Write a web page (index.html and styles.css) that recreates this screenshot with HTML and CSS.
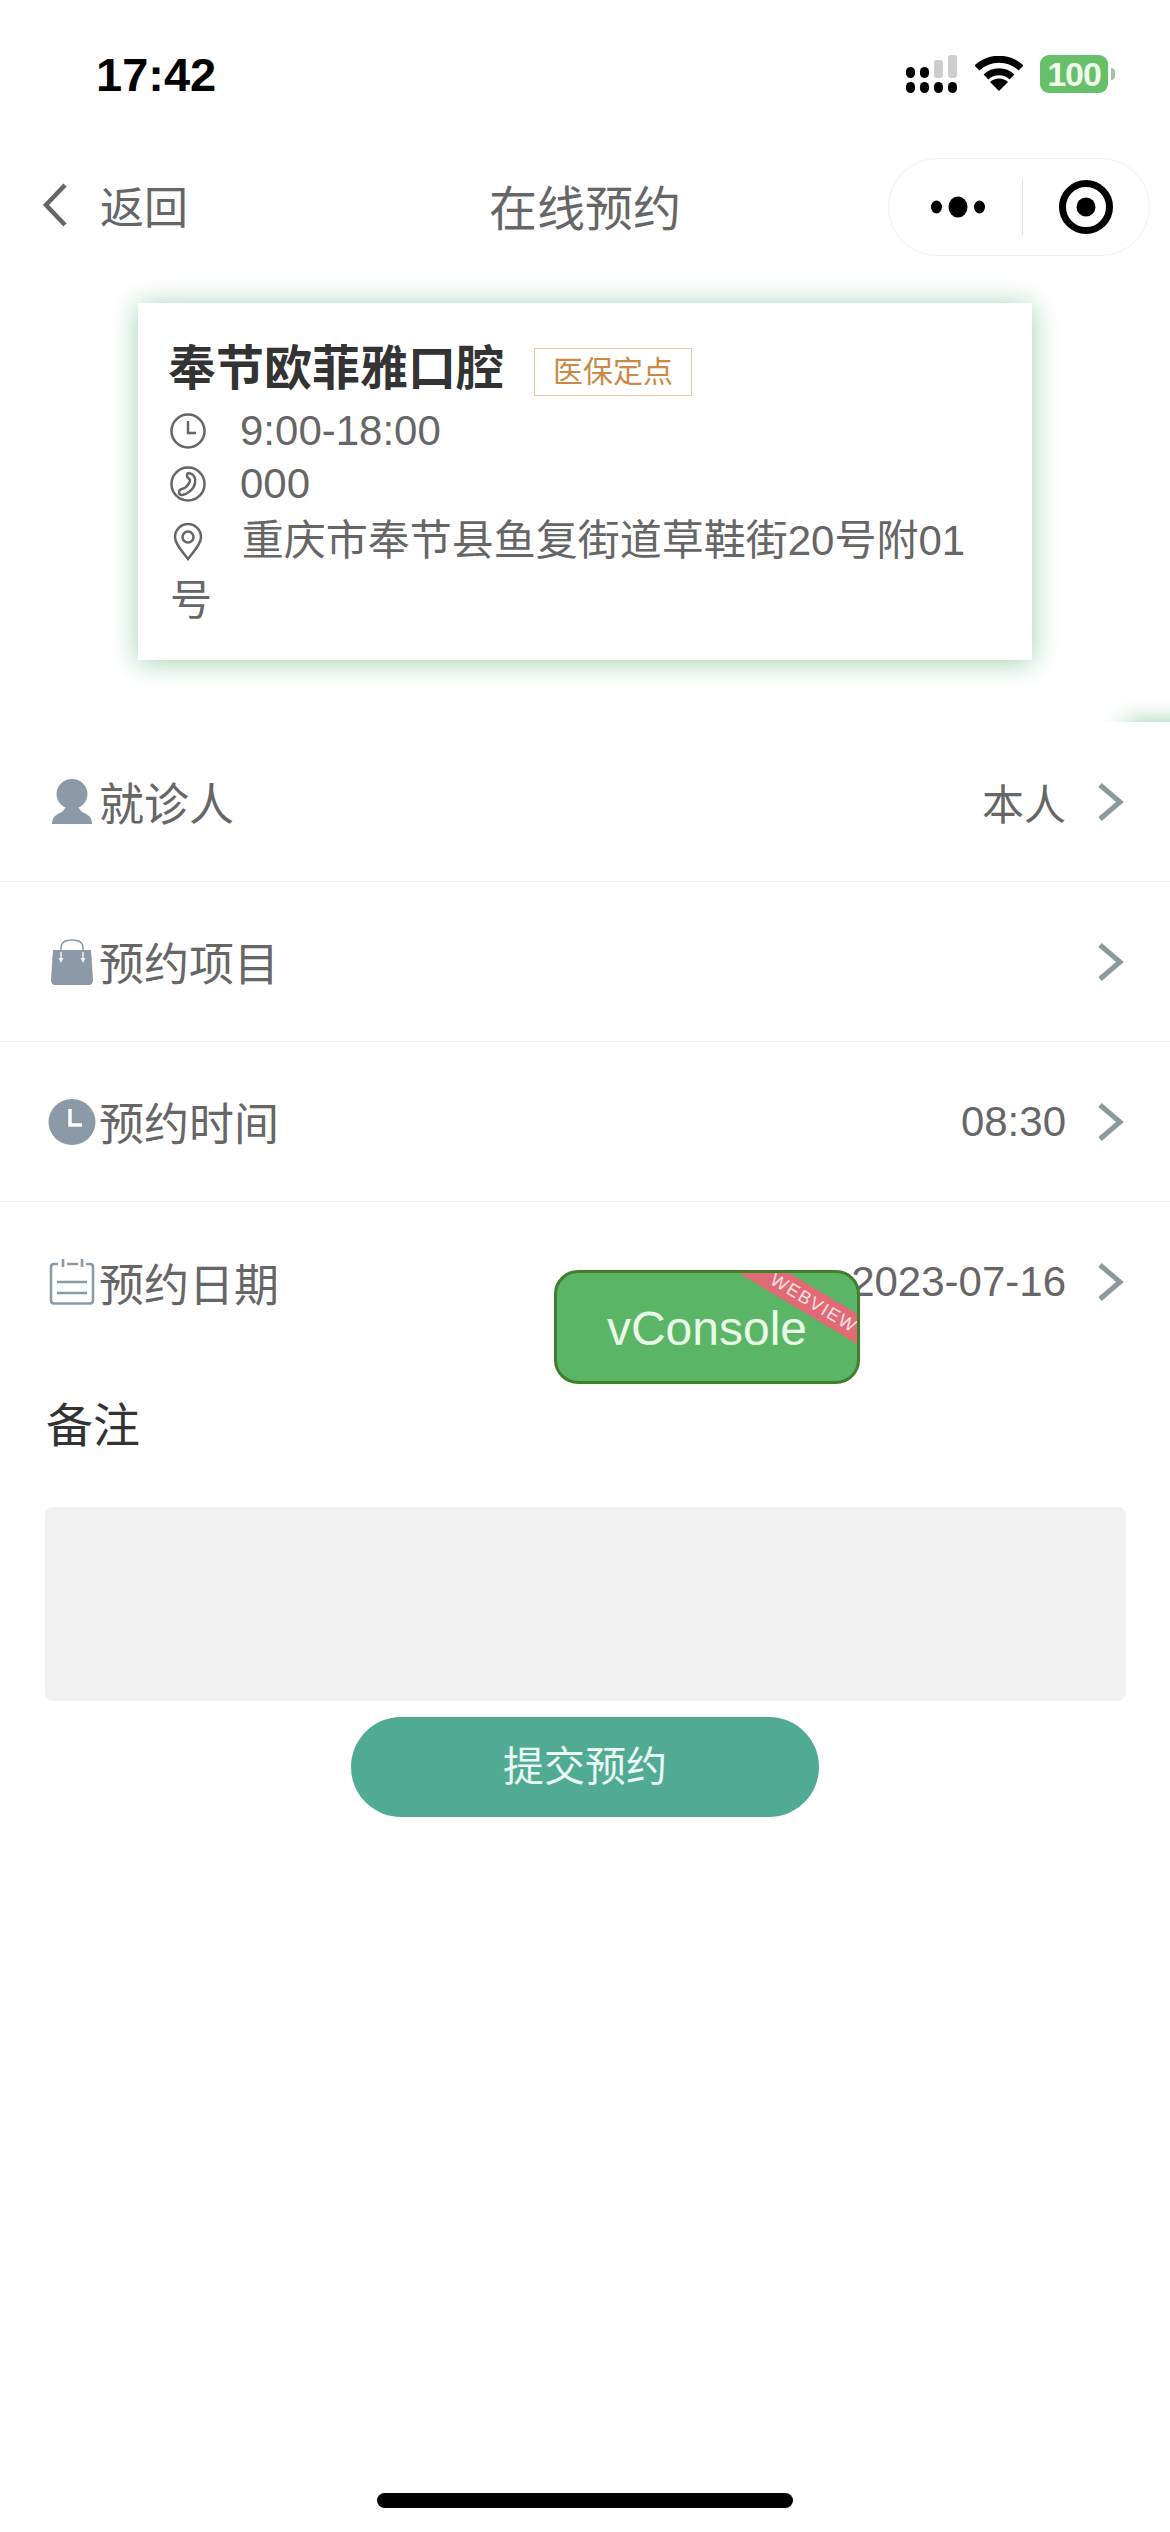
FILE: index.html
```html
<!DOCTYPE html>
<html lang="zh-CN">
<head>
    <meta charset="UTF-8">
    <meta name="viewport" content="width=device-width, initial-scale=1.0">
    <title>在线预约</title>
    <link rel="stylesheet" href="styles.css">
</head>
<body>

<div class="page">
    <div class="status-bar">
        <span class="time">17:42</span>
        <div class="status-icons">
            <svg class="signal" width="52" height="38" viewBox="0 0 52 38">
                <g fill="#000">
                    <rect x="0" y="12" width="9" height="11" rx="4.5"/>
                    <rect x="14" y="12" width="9" height="11" rx="4.5"/>
                    <rect x="0" y="27" width="9" height="11" rx="4.5"/>
                    <rect x="14" y="27" width="9" height="11" rx="4.5"/>
                    <rect x="28" y="27" width="9" height="11" rx="4.5"/>
                    <rect x="42" y="27" width="9" height="11" rx="4.5"/>
                </g>
                <g fill="#cdcdcd">
                    <rect x="28" y="5" width="9" height="18" rx="3"/>
                    <rect x="42" y="0" width="9" height="23" rx="3"/>
                </g>
            </svg>
            <svg class="wifi" width="48" height="36" viewBox="0 0 48 36">
                <path d="M2 12 A32 32 0 0 1 46 12" fill="none" stroke="#000" stroke-width="7"/>
                <path d="M11 21 A19 19 0 0 1 37 21" fill="none" stroke="#000" stroke-width="7"/>
                <path d="M24 35 L15 26 A13 13 0 0 1 33 26 Z" fill="#000"/>
            </svg>
            <div class="battery">
                <span class="battery-level">100</span>
                <span class="battery-cap"></span>
            </div>
        </div>
    </div>

    <div class="nav-bar">
        <div class="back">
            <svg width="30" height="46" viewBox="0 0 30 46">
                <path d="M25 3 L6 23 L25 43" fill="none" stroke="#666" stroke-width="4.5"/>
            </svg>
            <span>返回</span>
        </div>
        <div class="nav-title">在线预约</div>
        <div class="capsule">
            <div class="capsule-part capsule-more">
                <svg width="54" height="22" viewBox="0 0 54 22">
                    <ellipse cx="5.5" cy="11" rx="5.5" ry="6.5"/>
                    <ellipse cx="27" cy="11" rx="9.5" ry="10.5"/>
                    <ellipse cx="48.5" cy="11" rx="5.5" ry="6.5"/>
                </svg>
            </div>
            <div class="capsule-line"></div>
            <div class="capsule-part">
                <svg width="54" height="54" viewBox="0 0 54 54">
                    <circle cx="27" cy="27" r="23.5" fill="none" stroke="#000" stroke-width="7"/>
                    <circle cx="27" cy="27" r="9.5"/>
                </svg>
            </div>
        </div>
    </div>

    <div class="shop-card">
        <div class="shop-head">
            <span class="shop-name">奉节欧菲雅口腔</span>
            <span class="shop-tag">医保定点</span>
        </div>
        <div class="shop-line">
            <svg class="shop-icon" width="36" height="36" viewBox="0 0 36 36">
                <circle cx="18" cy="18" r="16.5"/>
                <path d="M18 8 V20 H26"/>
            </svg>
            <span>9:00-18:00</span>
        </div>
        <div class="shop-line">
            <svg class="shop-icon" width="36" height="36" viewBox="0 0 36 36">
                <circle cx="18" cy="18" r="16.5"/>
                <path d="M19 7 C24 8 26 12 25 17 C24 23 18 28 12 29 C9 29 8 26 10 24 C12 22 15 23 16 21 C18 19 20 17 20 14 C19 12 17 12 17 10 C17 8 18 7 19 7 Z"/>
            </svg>
            <span>000</span>
        </div>
        <p class="shop-address">
            <svg class="shop-icon" width="36" height="38" viewBox="0 0 36 38">
                <path d="M18 36 C12 28 5 21 5 14 A13 13 0 0 1 31 14 C31 21 24 28 18 36 Z"/>
                <circle cx="18" cy="14" r="5.5"/>
            </svg>
            重庆市奉节县鱼复街道草鞋街20号附01号
        </p>
    </div>

    <div class="side-mark"></div>

    <div class="form-list">
        <div class="form-row">
            <div class="row-left">
                <svg class="row-icon" width="48" height="46" viewBox="0 0 48 46">
                    <ellipse cx="24" cy="15" rx="15.5" ry="15" fill="#8b9aa6"/>
                    <path d="M4 45 Q4 36 14 33 L18 28 H30 L34 33 Q44 36 44 45 Z" fill="#8b9aa6"/>
                </svg>
                <span>就诊人</span>
            </div>
            <div class="row-right">
                <span>本人</span>
                <svg class="chevron" width="28" height="40" viewBox="0 0 28 40"><path d="M4 3 L24 20 L4 37"/></svg>
            </div>
        </div>
        <div class="form-row">
            <div class="row-left">
                <svg class="row-icon" width="48" height="46" viewBox="0 0 48 46">
                    <path d="M5 11 H43 L45 41 Q45 46 41 46 H7 Q3 46 3 41 Z" fill="#8b9aa6"/>
                    <path d="M13 12 V9 Q13 1 24 1 Q35 1 35 9 V12" fill="none" stroke="#8b9aa6" stroke-width="1.5"/>
                    <path d="M13 13 V21 M35 13 V21" stroke="#eef3f5" stroke-width="1.5"/>
                    <path d="M10.5 19 L13 24 L15.5 19 Z M32.5 19 L35 24 L37.5 19 Z" fill="#eef3f5"/>
                </svg>
                <span>预约项目</span>
            </div>
            <div class="row-right">
                <svg class="chevron" width="28" height="40" viewBox="0 0 28 40"><path d="M4 3 L24 20 L4 37"/></svg>
            </div>
        </div>
        <div class="form-row">
            <div class="row-left">
                <svg class="row-icon" width="48" height="46" viewBox="0 0 48 46">
                    <ellipse cx="24" cy="23" rx="23.5" ry="23" fill="#8b9aa6"/>
                    <path d="M22 10 V26 H34" fill="none" stroke="#fff" stroke-width="3.5"/>
                </svg>
                <span>预约时间</span>
            </div>
            <div class="row-right">
                <span>08:30</span>
                <svg class="chevron" width="28" height="40" viewBox="0 0 28 40"><path d="M4 3 L24 20 L4 37"/></svg>
            </div>
        </div>
        <div class="form-row">
            <div class="row-left">
                <svg class="row-icon" width="48" height="46" viewBox="0 0 48 46">
                    <path d="M10 5 H6 Q3 5 3 8 V41 Q3 44.5 6 44.5 H42 Q45 44.5 45 41 V8 Q45 5 42 5 H38 M19 5 H30 M15 0 V8 M34 0 V8 M9 23 H39 M9 34 H39" fill="none" stroke="#8b9aa6" stroke-width="2.6"/>
                </svg>
                <span>预约日期</span>
            </div>
            <div class="row-right">
                <span>2023-07-16</span>
                <svg class="chevron" width="28" height="40" viewBox="0 0 28 40"><path d="M4 3 L24 20 L4 37"/></svg>
            </div>
        </div>
    </div>

    <div class="remark">
        <div class="remark-title">备注</div>
        <div class="remark-box"></div>
    </div>

    <div class="submit-wrap">
        <div class="submit-btn">提交预约</div>
    </div>

    <div class="vconsole">
        vConsole
        <div class="ribbon">WEBVIEW</div>
    </div>

    <div class="home-bar"></div>
</div>

</body>
</html>
```

FILE: styles.css
```css
* {
    box-sizing: border-box;
}
body {
    margin: 0;
    background: #fff;
    font-family: 'Liberation Sans', 'Noto Sans CJK SC', sans-serif;
    color: #666;
}
.page {
    position: relative;
    width: 1170px;
    height: 2532px;
    overflow: hidden;
    background: #fff;
}

/* status bar */
.status-bar {
    display: flex;
    justify-content: space-between;
    align-items: center;
    height: 148px;
    padding: 0 55px 0 96px;
}
.time {
    font-size: 47px;
    font-weight: bold;
    color: #000;
}
.status-icons {
    display: flex;
    align-items: center;
    gap: 17px;
}
.battery {
    display: flex;
    align-items: center;
    gap: 3px;
}
.battery-level {
    width: 68px;
    height: 38px;
    background: #66bf69;
    border-radius: 9px;
    color: #eefbea;
    font-size: 34px;
    font-weight: bold;
    line-height: 38px;
    text-align: center;
    letter-spacing: -1px;
}
.battery-cap {
    width: 4px;
    height: 12px;
    background: #9cc79e;
    border-radius: 0 4px 4px 0;
}

/* nav */
.nav-bar {
    position: relative;
    display: flex;
    justify-content: space-between;
    align-items: center;
    height: 98px;
    margin-top: 10px;
    padding: 0 20px 0 40px;
}
.back {
    display: flex;
    align-items: center;
    gap: 30px;
    font-size: 44px;
    padding-bottom: 4px;
}
.nav-title {
    position: absolute;
    left: 0;
    right: 0;
    text-align: center;
    font-size: 48px;
    padding-bottom: 5px;
}
.capsule {
    display: flex;
    align-items: center;
    width: 262px;
    height: 98px;
    border: 1px solid #f0f0f0;
    border-radius: 49px;
}
.capsule-part {
    flex: 1;
    display: flex;
    justify-content: center;
    align-items: center;
}
.capsule-more {
    padding-left: 6px;
}
.capsule-line {
    width: 1px;
    height: 56px;
    background: #e2e2e2;
}

/* shop card */
.shop-card {
    width: 894px;
    height: 357px;
    margin: 47px 0 0 138px;
    padding: 34px 60px 0 32px;
    background: #fff;
    box-shadow: 0 2px 26px rgba(80, 170, 110, 0.55);
    font-size: 42px;
}
.shop-head {
    display: flex;
    align-items: center;
    gap: 30px;
    height: 54px;
}
.shop-name {
    margin-left: -2px;
    font-size: 48px;
    font-weight: bold;
    color: #333;
}
.shop-tag {
    height: 48px;
    padding: 0 18px;
    border: 1px solid #e3c9a6;
    color: #c98a45;
    font-size: 30px;
    line-height: 46px;
    margin-top: 16px;
}
.shop-line {
    display: flex;
    align-items: center;
    gap: 34px;
    height: 53px;
}
.shop-head + .shop-line {
    margin-top: 13px;
}
.shop-icon {
    flex-shrink: 0;
    fill: none;
    stroke: #666;
    stroke-width: 2.5;
}
.shop-address {
    margin: 1px 0 0;
    line-height: 60px;
}
.shop-address .shop-icon {
    vertical-align: -6px;
    margin-right: 24px;
}

/* edge of the next card, hidden under the list so only its shadow shows */
.side-mark {
    position: absolute;
    left: 1126px;
    top: 724px;
    width: 100px;
    height: 40px;
    background: #fff;
    box-shadow: 0 0 26px rgba(80, 170, 110, 0.7);
}

/* rows */
.form-list {
    position: relative;
    margin-top: 62px;
    background: #fff;
}
.form-row {
    display: flex;
    justify-content: space-between;
    align-items: center;
    height: 160px;
    padding: 0 46px 0 48px;
    border-bottom: 1px solid #eee;
    font-size: 45px;
}
.form-row:last-child {
    border-bottom: none;
}
.row-left {
    display: flex;
    align-items: center;
}
.row-icon {
    margin-right: 3px;
}
.row-right {
    display: flex;
    align-items: center;
    gap: 30px;
    font-size: 42px;
}
.chevron {
    fill: none;
    stroke: #8a9a9d;
    stroke-width: 5;
}

/* remark */
.remark {
    padding: 0 44px 0 46px;
}
.remark-title {
    font-size: 47px;
    color: #333;
    line-height: 64px;
    margin-top: 32px;
}
.remark-box {
    height: 194px;
    margin-top: 49px;
    margin-left: -1px;
    background: #f1f1f1;
    border-radius: 8px;
}
.submit-wrap {
    display: flex;
    justify-content: center;
    margin-top: 16px;
}
.submit-btn {
    width: 468px;
    height: 100px;
    background: #51ab93;
    border-radius: 50px;
    color: #eafaf5;
    font-size: 41px;
    line-height: 100px;
    text-align: center;
}

/* floating debug button */
.vconsole {
    position: absolute;
    left: 554px;
    top: 1270px;
    width: 306px;
    height: 114px;
    overflow: hidden;
    background: #5bb566;
    border: 3px solid #3f7f2e;
    border-radius: 24px;
    color: #e8fbe6;
    font-size: 48px;
    line-height: 112px;
    text-align: center;
}
.ribbon {
    position: absolute;
    left: 147px;
    top: 17px;
    width: 220px;
    height: 26px;
    background: #e26a75;
    color: #fbe3e5;
    font-size: 18px;
    line-height: 26px;
    letter-spacing: 1.5px;
    transform: rotate(31deg);
}
.home-bar {
    position: absolute;
    left: 377px;
    top: 2493px;
    width: 416px;
    height: 15px;
    background: #000;
    border-radius: 8px;
}
```
